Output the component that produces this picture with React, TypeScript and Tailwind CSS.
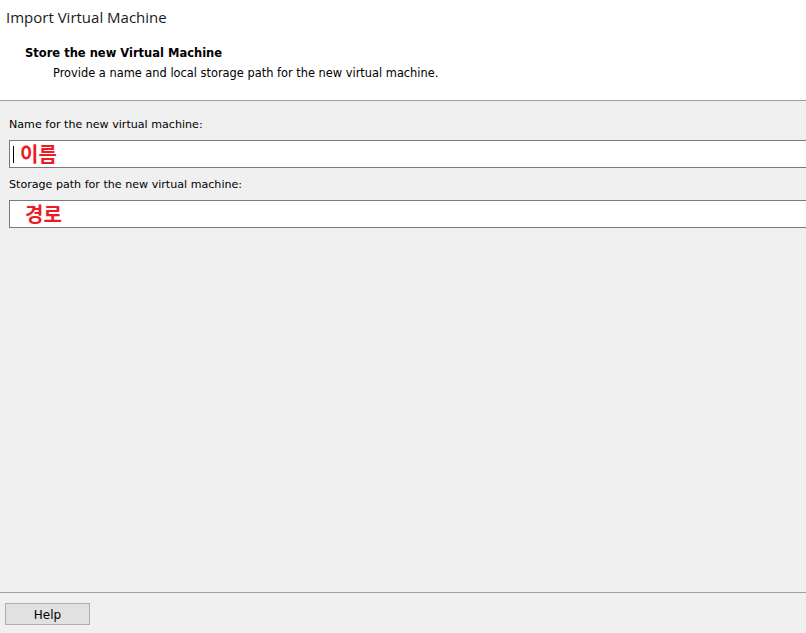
import React from "react";

export default function App() {
  const ui = { fontFamily: "Tahoma, 'DejaVu Sans', 'Noto Sans', sans-serif" };
  return (
    <div className="w-[806px] h-[633px] bg-[#f0f0f0] flex flex-col overflow-hidden" style={ui}>
      <div className="h-[101px] bg-white border-b border-[#a0a0a0] flex flex-col">
        <div className="pl-[6px] pt-[7px] text-[15px] leading-[20px] text-[#1a1a1a]" style={{ fontFamily: "'Open Sans', 'Noto Sans', sans-serif" }}>
          Import Virtual Machine
        </div>
        <div className="pl-[25px] pt-[19px] text-[11.5px] leading-[14px] font-bold text-black">
          Store the new Virtual Machine
        </div>
        <div className="pl-[53px] pt-[6px] text-[11.4px] leading-[14px] text-black">
          Provide a name and local storage path for the new virtual machine.
        </div>
      </div>
      <div className="flex-1 flex flex-col pl-[9px]">
        <div className="pt-[17px] text-[11.1px] leading-[14px] text-black">Name for the new virtual machine:</div>
        <div className="mt-[8px] h-[28px] bg-white border border-r-0 border-[#7a7a7a] flex items-center">
          <span className="ml-[3px] w-px h-[17px] bg-black" />
          <span className="ml-[6px] text-[20px] font-bold text-[#ed1c24] leading-none" style={{ fontFamily: "'Noto Sans CJK KR', sans-serif" }}>이름</span>
        </div>
        <div className="pt-[10px] text-[11.1px] leading-[14px] text-black">Storage path for the new virtual machine:</div>
        <div className="mt-[8px] h-[28px] bg-white border border-r-0 border-[#7a7a7a] flex items-center">
          <span className="ml-[15px] text-[20px] font-bold text-[#ed1c24] leading-none" style={{ fontFamily: "'Noto Sans CJK KR', sans-serif" }}>경로</span>
        </div>
      </div>
      <div className="h-[41px] border-t border-[#a0a0a0] flex items-start pl-[5px] pt-[10px]">
        <button className="w-[85px] h-[22px] bg-[#e1e1e1] border border-[#adadad] text-[12px] text-black leading-none pt-px" style={ui}>
          Help
        </button>
      </div>
    </div>
  );
}
